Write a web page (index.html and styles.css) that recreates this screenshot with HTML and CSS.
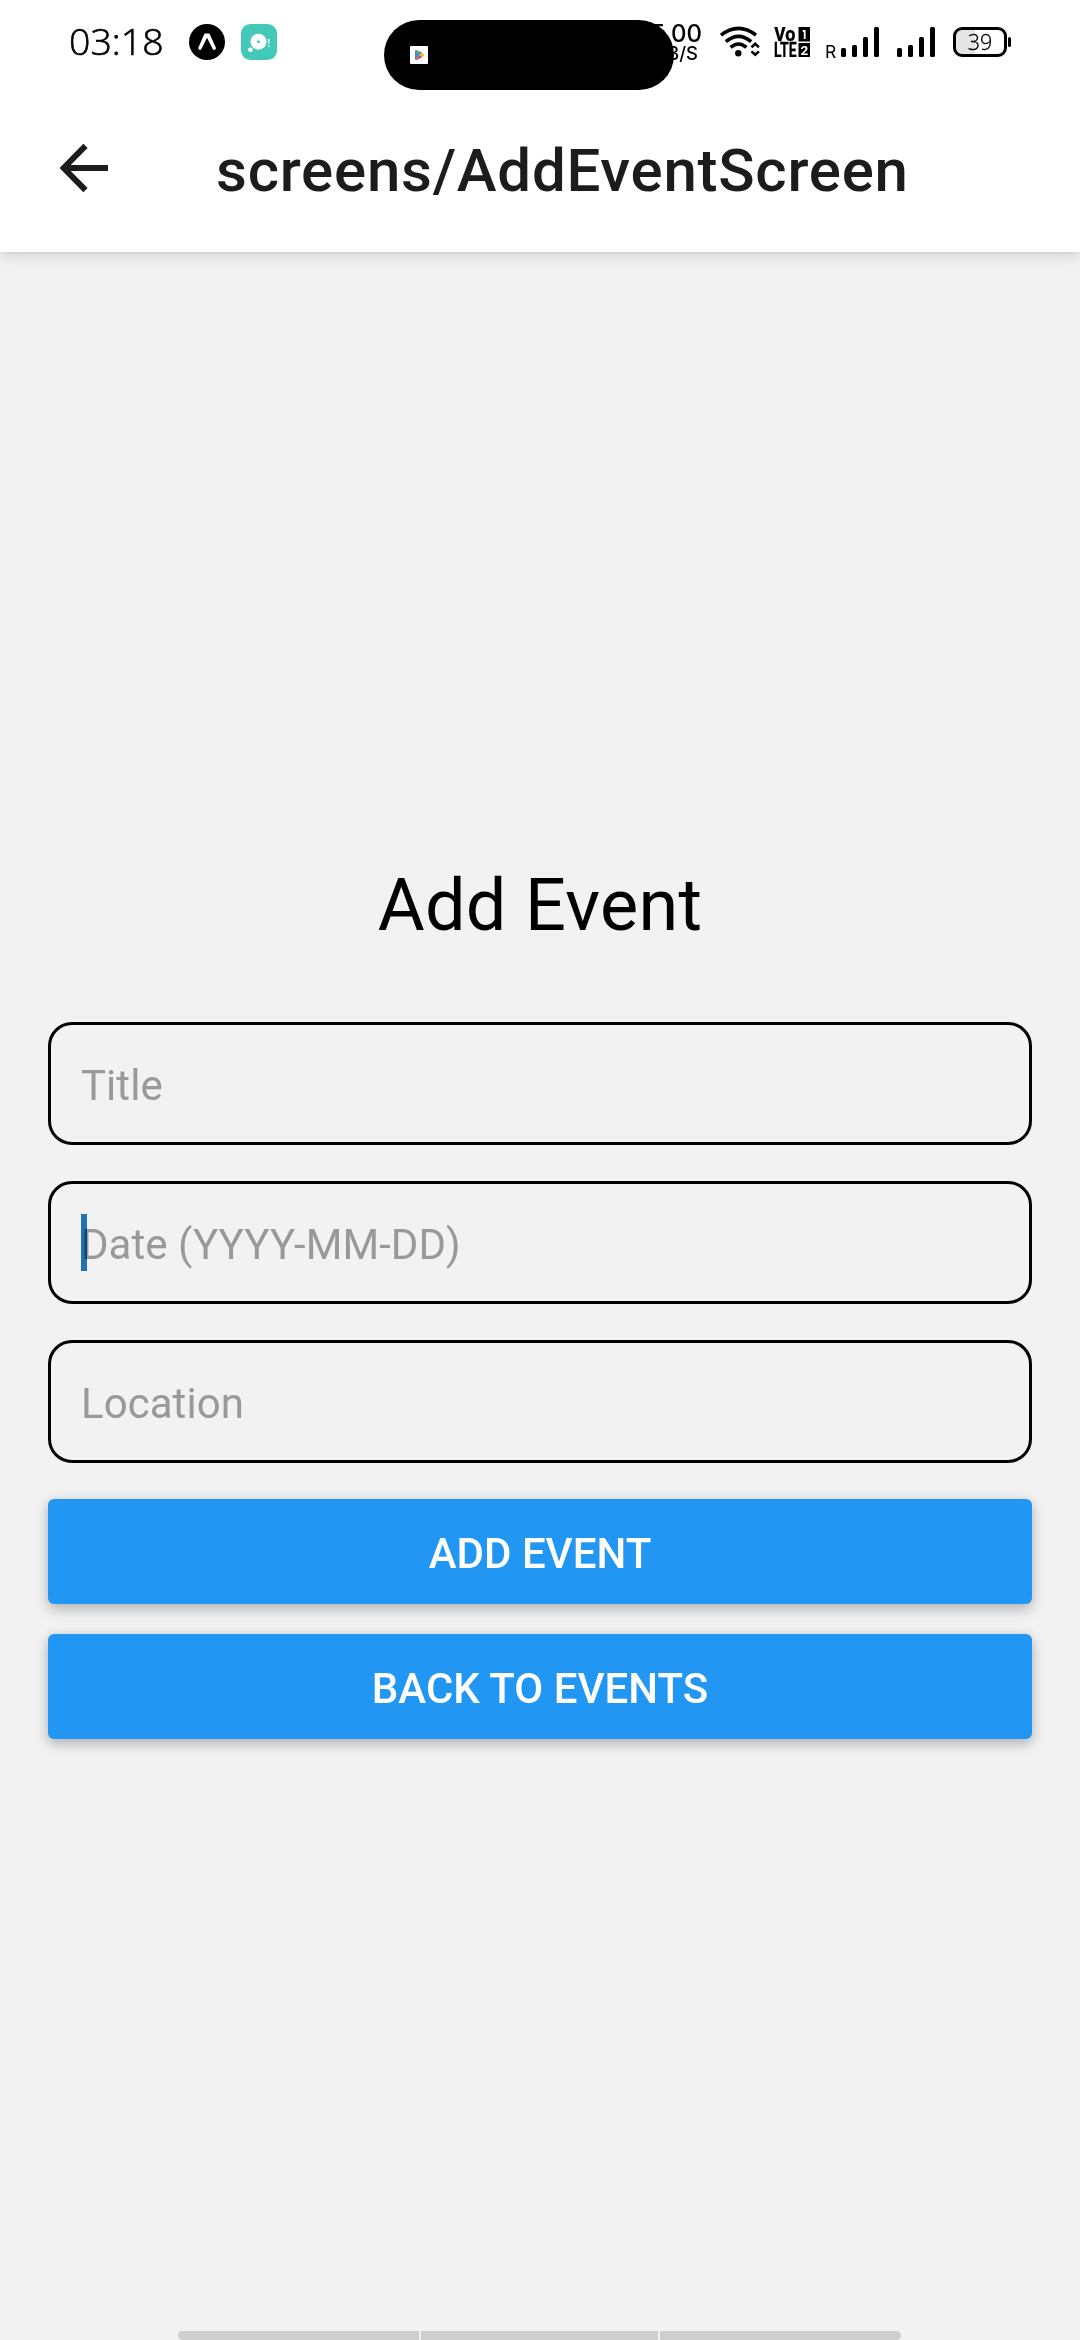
FILE: index.html
```html
<!DOCTYPE html>
<html lang="en">
<head>
<meta charset="utf-8">
<title>Add Event</title>
<link rel="stylesheet" href="styles.css">
</head>
<body>
<div class="screen">
  <header class="top">
    <div class="status">
      <span class="clock">03:18</span>
      <svg class="app-icon" width="36" height="36" viewBox="0 0 36 36">
        <circle cx="18" cy="18" r="18"/>
        <path d="M16.2 9.5h3.6c.5 0 .8.3 1 .8l6 13.2c.4 1-.2 1.9-1 2.3-.8.3-1.6 0-2.1-.9L18 13.8l-5.600 11.100c-.5.900-1.300 1.200-2.100.900-.8-.4-1.300-1.300-.900-2.300l5.800-13.200c.2-.5.500-.8 1-.8z" fill="#fff"/>
      </svg>
      <svg class="chat-icon" width="36" height="36" viewBox="0 0 36 36">
        <rect width="36" height="36" rx="9.500" fill="#43c9b8"/>
        <circle cx="17.500" cy="17.700" r="8" fill="#fff"/>
        <circle cx="9.400" cy="25.800" r="2.300" fill="#fff"/>
        <rect x="16" y="16.600" width="3" height="2.400" rx="1" fill="#43c9b8"/>
        <path d="M26.800 15h2l-.4 5h-1.200zM27 21.300h1.600v1.700H27z" fill="#d4f5f0"/>
      </svg>
      <div class="speed"><span class="rate">5.00</span><span class="unit">KB/S</span></div>
      <svg class="wifi" width="40" height="32" viewBox="0 0 40 32">
        <g fill="none" stroke="#000" stroke-width="3.500">
          <path d="M1 9.200Q18.500-4.400 36 9.200"/>
          <path d="M5.800 15.600Q18.500 5.200 31.200 15.600"/>
          <path d="M10.600 21.400Q18.500 14.600 26.400 21.400"/>
          <path d="M31.500 21.200l3.700-3.400 3.700 3.400M31.500 25.400l3.700 3.400 3.700-3.400" stroke-width="2.600"/>
        </g>
        <circle cx="18.300" cy="27.300" r="3.200"/>
      </svg>
      <svg class="volte" width="36" height="30" viewBox="0 0 36 30">
        <text x="0" y="14" textLength="21.500" lengthAdjust="spacingAndGlyphs" class="volte-text">Vo</text>
        <text x="0" y="30" textLength="22.500" lengthAdjust="spacingAndGlyphs" class="volte-text">LTE</text>
        <path d="M24.500 0H36v14.500H24.500zM24.500 16H36v14H24.500z"/>
        <path d="M28.800 3h2.800v9h-1.800V5h-1z" fill="#fff"/>
        <text x="26.600" y="28" class="volte-num">2</text>
      </svg>
      <span class="roaming">R</span>
      <svg class="bars" width="39" height="30" viewBox="0 0 39 30">
        <rect y="21" width="5" height="9" rx="1.500"/><rect x="11" y="18" width="5" height="12" rx="1.500"/><rect x="22" y="10" width="5" height="20" rx="1.500"/><rect x="33" width="5" height="30" rx="1.500"/>
      </svg>
      <svg class="bars second" width="39" height="30" viewBox="0 0 39 30">
        <rect y="21" width="5" height="9" rx="1.500"/><rect x="11" y="18" width="5" height="12" rx="1.500"/><rect x="22" y="10" width="5" height="20" rx="1.500"/><rect x="33" width="5" height="30" rx="1.500"/>
      </svg>
      <div class="battery"><span>39</span></div>
      <i class="nub"></i>
      <div class="island">
        <svg width="18" height="18" viewBox="0 0 18 18">
          <rect width="18" height="18" rx="1" fill="#fff"/>
          <path d="M5 4v10l5-5z" fill="#4d86cf"/>
          <path d="M5 4l5 5 2.200-2.200L6.500 4z" fill="#46a35b"/>
          <path d="M5 14l5-5 2.200 2.200L6.500 14z" fill="#d04d4f"/>
          <path d="M10 9l2.200-2.200L14.500 9l-2.300 2.200z" fill="#efb832"/>
        </svg>
      </div>
    </div>
    <div class="appbar">
      <svg class="back" width="48" height="48" viewBox="0 0 48 48">
        <path d="M25.500 1.800L3.600 24l21.900 22.200M5 24h43" fill="none" stroke="#1c1c1e" stroke-width="6"/>
      </svg>
      <h1 class="title">screens/AddEventScreen</h1>
    </div>
  </header>
  <main class="form">
    <h2 class="heading">Add Event</h2>
    <div class="field">Title</div>
    <div class="field"><i class="caret"></i>Date (YYYY-MM-DD)</div>
    <div class="field">Location</div>
    <button class="btn">ADD EVENT</button>
    <button class="btn">BACK TO EVENTS</button>
  </main>
  <footer class="gesture"><i></i><i></i><i></i></footer>
</div>
</body>
</html>
```
FILE: styles.css
```css
* { box-sizing: border-box; }
body { margin: 0; background: #f2f2f2; font-family: Roboto, sans-serif; color: #000; }
svg { display: block; flex: none; }
.screen { width: 1080px; height: 2340px; display: flex; flex-direction: column; overflow: hidden; background: #f2f2f2; }

.top { flex: none; height: 252px; background: #fff; box-shadow: 0 4px 14px rgba(0,0,0,.13), 0 1px 3px rgba(0,0,0,.07); }
.status { position: relative; height: 84px; display: flex; align-items: center; padding-left: 69px; }
.clock { width: 120px; padding-bottom: 2px; font: 300 37.5px/82px "Open Sans", sans-serif; -webkit-text-stroke: .6px #000; }
.chat-icon { margin-left: 16px; }
.speed { width: 56px; margin-left: 369px; display: flex; flex-direction: column; align-items: flex-end; font-family: Inter, sans-serif; font-weight: 500; }
.rate { font-size: 24px; line-height: 22px; }
.unit { font-size: 18.5px; line-height: 16px; padding-right: 4px; }
.wifi { margin-left: 18px; }
.volte { margin-left: 14px; }
.volte-text { font: 700 19.500px/1 "Roboto", sans-serif; stroke: #000; stroke-width: .3px; }
.volte-num { font: 700 13.500px/1 "Roboto", sans-serif; fill: #fff; }
.roaming { width: 16px; margin-left: 15px; padding-top: 19px; font: 400 17.500px/20px Inter, sans-serif; }
.bars.second { margin-left: 17px; }
.battery { width: 54px; height: 30px; margin-left: 17px; border: 3.500px solid #000; border-radius: 9px; background: linear-gradient(90deg, #e6e6e6 19px, #fff 19px); display: flex; align-items: center; justify-content: center; font: 300 21.500px/20px "Open Sans", sans-serif; -webkit-text-stroke: .3px #000; }
.nub { width: 3px; height: 10px; margin-left: 1px; border-radius: 1.500px; background: #000; }
.island { position: absolute; left: 384px; top: 20px; width: 290px; height: 70px; border-radius: 35px; background: #000; display: flex; align-items: center; padding-left: 26px; }

.appbar { height: 168px; display: flex; align-items: center; padding: 0 0 0 60px; }
.back { align-self: flex-start; margin-top: 60px; }
.title { margin: 0 0 0 108px; align-self: flex-start; padding-top: 52px; font-size: 60px; font-weight: 500; line-height: 70px; letter-spacing: .75px; color: #1c1c1e; white-space: nowrap; }

.form { flex: 1; display: flex; flex-direction: column; padding: 605px 48px 0; }
.heading { margin: 0 0 68px; font-size: 72px; font-weight: 400; line-height: 97px; letter-spacing: .3px; text-align: center; }
.field { position: relative; height: 123px; margin-bottom: 36px; border: 3px solid #000; border-radius: 24px; padding: 2px 30px 0; font-size: 42px; line-height: 117px; letter-spacing: .05px; color: #999; }
.caret { position: absolute; left: 30px; top: 30px; width: 6px; height: 57px; background: #2079bc; mix-blend-mode: multiply; }
.btn { height: 105px; margin: 0 0 30px; padding: 5px 0 0; border: 0; border-radius: 6px; background: #2196f3; color: #fff; font: 500 42px/50px Roboto, sans-serif; box-shadow: 0 6px 14px rgba(0,0,0,.2), 0 1px 12px rgba(0,0,0,.1); }

.gesture { flex: none; width: 723px; height: 9px; margin: 0 0 0 178px; display: grid; grid-template-columns: 1fr 237px 1fr; gap: 2px; border-radius: 4.500px; overflow: hidden; }
.gesture i { background: #cecece; }
```
